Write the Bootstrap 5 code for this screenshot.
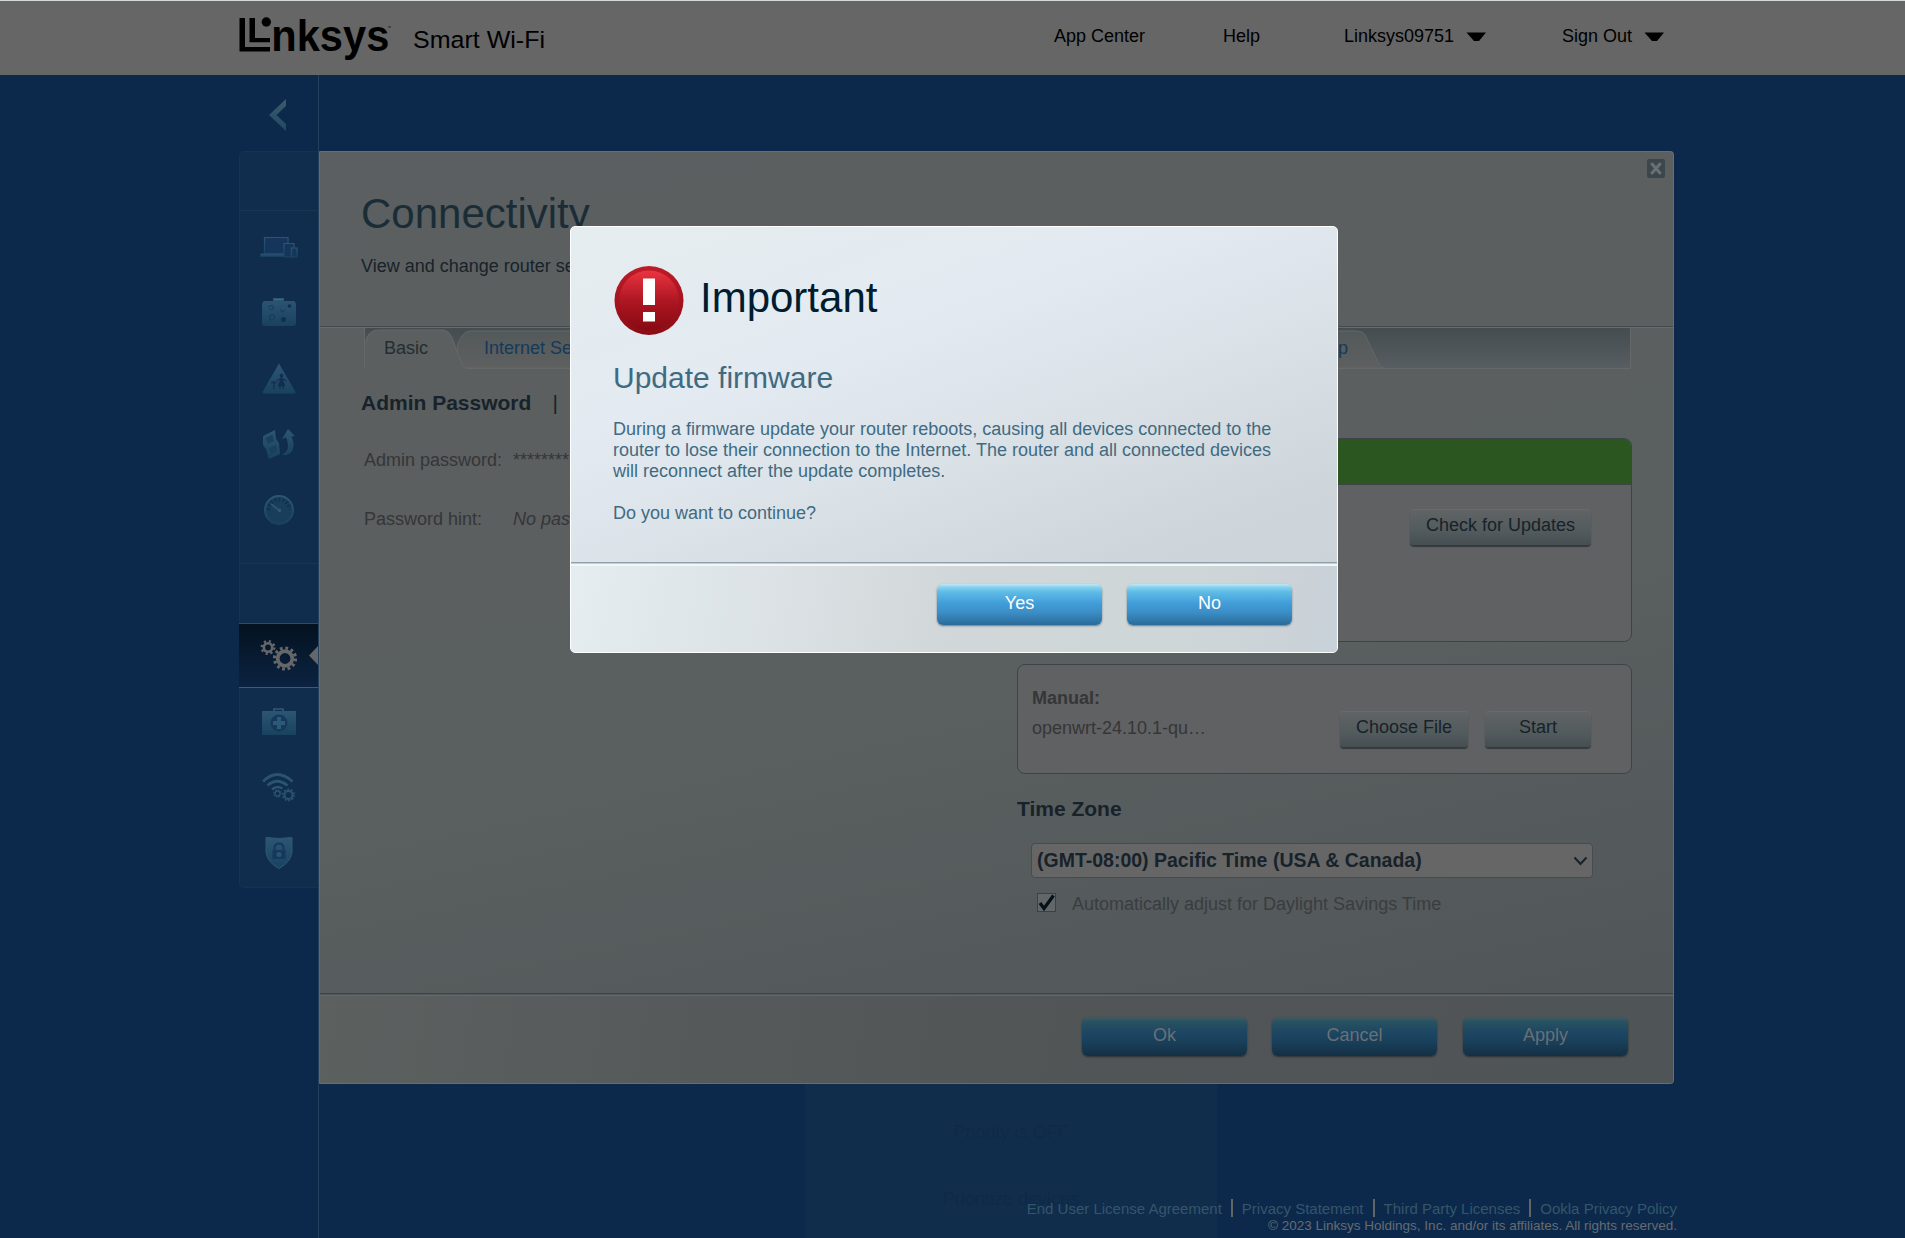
<!DOCTYPE html>
<html lang="en">
<head>
<meta charset="utf-8">
<title>Linksys Smart Wi-Fi</title>
<link href="https://cdn.jsdelivr.net/npm/bootstrap@5.3.0/dist/css/bootstrap.min.css" rel="stylesheet">
<style>
body{font-family:"Liberation Sans",Arial,sans-serif;font-size:18px;line-height:21px;background:#0c294c;color:#353637;width:1905px;height:1238px;overflow:hidden;position:relative}
a{text-decoration:none}
.topbar{height:75px;background:#666;border-top:1px solid #d5dbd9;padding:0 0 0 239px;color:#000}
.topbar a{color:#000}
.logo-svg{width:320px;height:74px;display:block}
.topnav{margin-left:495px;padding-top:25px}
.shell{height:1163px;padding-left:239px}
.side{width:80px;border-right:1px solid #24405c;flex:none}
.back{height:76px;padding:23px 0 0 29px}
.side-box{background:#112d4d;border:1px solid #15324f;border-right:0;border-radius:5px 0 0 5px;height:737px}
.side-gap{height:59px;border-bottom:1px solid #183651}
.side-gap.second{height:60px;border-bottom:0;border-top:1px solid #183651}
.side-item{height:66px;display:flex;align-items:center;justify-content:center;position:relative}
.side-item svg{overflow:visible;display:block}
.side-item.current{height:65px;background:linear-gradient(#04121f,#0b2342);border-top:1px solid #33495d;border-bottom:1px solid #4a5866;margin-left:-1px}
.pointer-tip{position:absolute;right:0;top:22px}
.content-col{width:1357px;padding-top:76px;flex:none}
.panel{width:1355px;height:933px;background:linear-gradient(168deg,#5b5f61 0,#5b5f60 40%,#5a5f5f 55%,#555a5c 75%,#4f5456 100%);border:1px solid #6a6d6e;border-left-color:#66696a;border-radius:0 4px 4px 0;position:relative}
.panel-head{height:176px;padding:37px 41px 0;border-bottom:1px solid #686c6d;box-shadow:inset 0 -1px #44494b}
.panel-head h1{font-size:42px;line-height:50px;color:#1a2d36;margin:0 0 17px}
.panel-head p{color:#182229;margin:0}
.close-x{position:absolute;right:8px;top:7px}
.tabstrip{width:1267px;height:41px;margin-left:44px;position:relative}
.tabstrip>svg{position:absolute;left:0;top:0}
.tabstrip nav{position:relative;padding:10px 283px 0 20px}
.tabstrip a{color:#15395a;white-space:nowrap}
.tabstrip a.on{color:#252d31;margin-right:56px}
.h-sec{font-size:21px;line-height:24px;font-weight:bold;color:#17222a;margin:0}
.col-l{width:697px;padding:22px 0 0 41px;flex:none}
.col-r{width:615px;padding-top:22px;flex:none}
.kv{height:59px;padding-left:3px}
.kv span:first-child{width:149px}
.box{background:#606162;border:1px solid #3d4448;border-radius:8px;overflow:hidden}
.box-fw{height:204px;margin-top:23px}
.green{height:46px;background:#2b561f;border-bottom:1px solid #3e464a}
.btn-g{font-size:18px;line-height:21px;color:#182229;border:0;border-radius:4px;height:36px;padding:5px 0 8px;background:linear-gradient(#616465,#525b5d 60%,#464e51);box-shadow:0 2px 1px #343a3c,inset 0 1px #686b6c}
.btn-g:hover{color:#182229}
.box-man{height:110px;margin-top:22px;padding:23px 40px 0 14px}
.tz{width:562px;height:35px;margin:22px 0 0 14px;background:#666;border:1px solid #454b4e;border-radius:4px;padding:0 4px 0 5px;color:#17222a;font-weight:bold;font-size:19.5px}
.dst{margin:14px 0 0 19px;color:#3a3d3f}
.panel-foot{position:absolute;left:0;right:0;bottom:0;height:90px;border-top:1px solid #3f4446;box-shadow:inset 0 1px #50585a,inset 0 2px #656869;background:linear-gradient(100deg,#5c605f,#56595a 30%,#525556 55%,#4f5456);padding:23px 45px 0 0;border-radius:0 0 4px 0}
.btn-b{width:165px;height:39px;font-size:18px;line-height:21px;border:0;border-radius:6px;padding:8px 0 10px;color:#6b6f72;background:linear-gradient(#3d5b67 0,#29525f 12%,#1c4663 40%,#193f5a 65%,#142f43);box-shadow:0 1px 2px #2c3032}
.ghost{width:412px;height:154px;margin-left:486px;background:#112d4c;color:#0f2948;text-align:center;padding-top:37px;line-height:22px}
.ghost p{margin:0 0 45px}
.legal{position:absolute;right:228px;top:1199px;font-size:15px;line-height:17px;text-align:right}
.legal a{color:#34566b;padding:1px 0 0}
.legal .lnk{border-left:2px solid #626567;padding-left:9px;margin-left:9px}
.legal small{font-size:13.5px;color:#676b70;line-height:15px;display:block;margin-top:1px}
.dlg{position:absolute;left:570px;top:226px;width:768px;height:427px;border:1px solid #fff;border-radius:5px;background:linear-gradient(160deg,#e5edef 0,#e3eaf1 30%,#dbe2e8 50%,#cfd6db 75%,#c8d0d7 100%);overflow:hidden}
.dlg-main{height:335px;padding:39px 42px 0;color:#3f6b82}
.dlg h2{font-size:42px;line-height:50px;color:#001d30;margin:0 0 0 16px;padding-top:7px}
.dlg h3{font-size:30px;line-height:36px;margin:24px 0 23px;color:#3f6b82}
.dlg p{margin:0 0 21px;width:670px}
.dlg-foot{height:91px;border-top:1px solid #8fa0a8;box-shadow:inset 0 1px #c4ced3,inset 0 3px #f3f6f7;background:linear-gradient(100deg,#e5edf0,#dbe1e4 28%,#d1d6d9 50%,#ced6d8 80%,#c9d1d9);padding:21px 45px 0 0}
.dlg .btn-b{color:#fff;height:41px;padding:9px 0 11px;background:linear-gradient(#bfe9f7 0,#86d1ee 8%,#5dbbe6 20%,#419cd8 48%,#3c8fc8 68%,#2a6b9a);box-shadow:0 1px 2px #6b7a83}
</style>
<script src="https://cdn.jsdelivr.net/npm/bootstrap@5.3.0/dist/js/bootstrap.bundle.min.js"></script>
</head>
<body>
<header class="topbar d-flex">
  <svg class="logo-svg" viewBox="239 1 320 74" fill="#000">
    <path d="M239.5 18H245V47H270V51.600H239.500ZM249.500 18H255V38H270V42.300H249.500Z"/>
    <circle cx="266.300" cy="22" r="4.700"/>
    <text x="271.300" y="51" font-size="44" font-weight="bold" textLength="118" lengthAdjust="spacingAndGlyphs">nksys</text>
    <path d="M388 27h3" stroke="#222" stroke-width="1"/>
    <text x="413" y="47.500" font-size="24.500" textLength="132" lengthAdjust="spacingAndGlyphs">Smart Wi-Fi</text>
  </svg>
  <nav class="topnav d-flex">
    <a href="#" style="width:169px">App Center</a>
    <a href="#" style="width:121px">Help</a>
    <a href="#" class="d-flex" style="width:218px">Linksys09751<svg class="ms-2 mt-1" width="25" height="14"><path d="M4.500 2.500H24L17 11H12Z"/></svg></a>
    <a href="#" class="d-flex">Sign Out<svg class="ms-2 mt-1" width="24" height="14"><path d="M4.500 2.500H24L17 11H12Z"/></svg></a>
  </nav>
</header>

<svg width="0" height="0" class="position-absolute">
  <defs>
    <linearGradient id="ic" x1="0" y1="0" x2="0" y2="1"><stop offset="0" stop-color="#2c5674"/><stop offset="1" stop-color="#19425f"/></linearGradient>
    <linearGradient id="ch" x1="0" y1="0" x2="0" y2="1"><stop offset="0" stop-color="#3b5a6f"/><stop offset="1" stop-color="#1f4a60"/></linearGradient>
    <linearGradient id="strip" x1="0" y1="0" x2="0" y2="1"><stop offset="0" stop-color="#454d50"/><stop offset="1" stop-color="#575d60"/></linearGradient>
    <linearGradient id="tab" x1="0" y1="0" x2="0" y2="1"><stop offset="0" stop-color="#53595a"/><stop offset="1" stop-color="#5e6060"/></linearGradient>
    <linearGradient id="red" x1="0" y1="0" x2="0" y2="1"><stop offset="0" stop-color="#ea3340"/><stop offset=".5" stop-color="#ae1622"/><stop offset="1" stop-color="#860a12"/></linearGradient>
    <linearGradient id="rim" x1="0" y1="0" x2="0" y2="1"><stop offset="0" stop-color="#bd1c28"/><stop offset="1" stop-color="#8c0c15"/></linearGradient>
  </defs>
</svg>

<main class="shell d-flex">
  <aside class="side">
    <div class="back"><svg width="20" height="36" class="d-block"><path d="M18 1V8L8.500 17L18 26V33L1 17Z" fill="url(#ch)"/></svg></div>
    <div class="side-box">
      <div class="side-gap"></div>
      <div class="side-item pt-2"><svg width="36" height="24"><g fill="#15365a" stroke="url(#ic)" stroke-width="1.200"><path d="M3.500 1.500H27V18H3.500Z"/><path d="M0 18H24V20.500H0Z" fill="#204b68"/><path d="M23 7.500H33V21H23Z"/><path d="M30.500 12H36V21H30.500Z"/></g></svg></div>
      <div class="side-item pt-1"><svg width="34" height="29"><path d="M2 3H11V0H22V3H32Q34 4 34 7V25Q34 28 31 28H3Q0 28 0 25V7Q0 4 2 3Z" fill="url(#ic)"/><path d="M12 1.500h9" stroke="#496578"/><g fill="none" stroke="#16395a"><path d="M6 9q5-3 6 1q-3 3-5 1M8 17h4q2 3-1 5h-3zM18 12l3 2M20 14l3-2"/></g><circle cx="27.500" cy="8" r="1.800" fill="#122f4f"/><circle cx="21.500" cy="21.500" r="2.500" fill="#122f4f"/></svg></div>
      <div class="side-item pt-1"><svg width="34" height="31"><path d="M17 .5L33.500 29Q34 30.500 32 30.500H2Q0 30.500 .5 29Z" fill="url(#ic)"/><g stroke="#122f4f" stroke-width="1.300" fill="none"><circle cx="19.500" cy="12.500" r="1.200" fill="#122f4f"/><path d="M14.500 18L19.500 15L24.500 18"/><path d="M19.500 15L16.500 22.500H22.500Z" fill="#122f4f"/><path d="M18 22V26M21 22V26M12 18V26M9 19.500H14.500"/></g></svg></div>
      <div class="side-item pt-1"><svg width="34" height="31"><path d="M1 7L13 1L14 10L17 14L18 25L7 30L4 20L1 16Z" fill="url(#ic)"/><path d="M3.500 9L10.500 5.500L12 12L6 15ZM7 19L14 16L15 22L8.500 25.500Z" fill="#1c4059"/><path d="M20 10L26 0L33 7L29.500 7.500Q33 15 30.500 21Q27 28 20 25.500Q26 23 26 17Q26 12 24 8.500Z" fill="url(#ic)"/></svg></div>
      <div class="side-item pt-1"><svg width="34" height="32"><circle cx="17" cy="16" r="14" fill="#183e5b" stroke="url(#ic)" stroke-width="2"/><path d="M6.500 16A10.500 10.500 0 0 1 27.500 16" fill="none" stroke="#122f4f" stroke-width="3.500" stroke-dasharray="1.600 2.400"/><path d="M9 10L18 17" stroke="#2f5875" stroke-width="1.600"/><circle cx="17.500" cy="16.500" r="1.700" fill="#2f5875"/></svg></div>
      <div style="height:22px"></div>
      <div class="side-gap second"></div>
      <div class="side-item current">
        <svg width="36" height="32"><g fill="none" stroke="#65676a"><circle cx="7" cy="7.500" r="4.200" stroke-width="2.600"/><circle cx="7" cy="7.500" r="6.300" stroke-width="2.400" stroke-dasharray="2.200 2.748"/><circle cx="24" cy="18.500" r="7.300" stroke-width="3.800"/><circle cx="24" cy="18.500" r="10.500" stroke-width="3.200" stroke-dasharray="2.800 2.698"/></g></svg>
        <svg class="pointer-tip" width="9" height="19"><path d="M9 0V19L0 9.500Z" fill="#65686a"/></svg>
      </div>
      <div class="side-item"><svg width="34" height="27"><path d="M0 3H34V27H0Z" fill="url(#ic)"/><path d="M12 3V1H21V3" fill="none" stroke="#315a73" stroke-width="1.700"/><circle cx="17" cy="15" r="8.500" fill="#16385a"/><path d="M17 9V21M11 15H23" stroke="#2c5a76" stroke-width="4"/></svg></div>
      <div class="side-item"><svg width="34" height="28"><g fill="none" stroke="#2a5470"><path d="M1 8.500Q15-5.500 30.500 8.500M5.500 12.500Q15 4 25.500 12.500" stroke-width="2.700"/><path d="M10 16.500Q15 12 20.500 15.500" stroke-width="2.500"/><circle cx="15.500" cy="20.500" r="2.500" stroke-width="1.300"/><circle cx="15.500" cy="20.500" r="3.600" stroke-width="1.300" stroke-dasharray="1.400 1.427"/><circle cx="26.500" cy="22" r="4" stroke-width="1.800"/><circle cx="26.500" cy="22" r="5.600" stroke-width="1.800" stroke-dasharray="1.760 1.760"/></g></svg></div>
      <div class="side-item"><svg width="28" height="32"><path d="M1 .5Q14 2.500 27 .5V15Q26 25 14 31.500Q2 25 1 15Z" fill="url(#ic)" stroke="#2f5a72"/><path d="M9.500 14V11Q9.500 6.500 14 6.500Q18.500 6.500 18.500 11V14" fill="none" stroke="#16385a" stroke-width="2"/><path d="M7.500 13H20.500V22H7.500Z" fill="#16385a"/><circle cx="14" cy="17.500" r="2.500" fill="#2a5470"/></svg></div>
    </div>
  </aside>

  <div class="content-col">
    <section class="panel">
      <svg class="close-x" width="18" height="19"><rect width="18" height="19" rx="2" fill="#3b474c"/><path d="M5 5L13 14M13 5L5 14" stroke="#6b7173" stroke-width="3" stroke-linecap="round"/></svg>
      <div class="panel-head"><h1>Connectivity</h1><p>View and change router settings</p></div>
      <div class="tabstrip">
        <svg width="1267" height="42">
          <rect width="1267" height="40" fill="url(#strip)"/>
          <path d="M90 40L94 16Q99 3 106 3H993Q999 3 1001 7L1015 36Q1017 40 1020 40Z" fill="url(#tab)" stroke="#646666"/>
          <path d="M1 41V14Q3 2 15 2H78Q85 2 88 10L97 34Q99 40 104 40.500V42H1Z" fill="#5b5f60"/>
          <path d="M.5 0V40.500M2 14Q4 2 15 2H78Q85 2 88 10L97 34Q99 40.500 104 40.500H1266.500V0" fill="none" stroke="#676969"/>
        </svg>
        <nav class="d-flex"><a href="#" class="on">Basic</a><a href="#" class="me-auto">Internet Settings</a><a href="#">CA Router Setup</a></nav>
      </div>
      <div class="d-flex">
        <div class="col-l">
          <div class="d-flex h-sec"><h4 class="h-sec">Admin Password</h4><span class="fw-normal" style="margin-left:21px">|</span></div>
          <div class="kv d-flex" style="margin-top:35px"><span>Admin password:</span><span>********</span></div>
          <div class="kv d-flex"><span>Password hint:</span><i>No password hint</i></div>
        </div>
        <div class="col-r">
          <h4 class="h-sec">Firmware Update</h4>
          <div class="box box-fw"><div class="green"></div><div class="d-flex justify-content-end" style="padding:24px 40px 0 0"><button class="btn btn-g" style="width:181px">Check for Updates</button></div></div>
          <div class="box box-man"><b class="d-block">Manual:</b>
            <div class="d-flex align-items-start" style="padding-top:2px"><span class="me-auto" style="padding-top:7px">openwrt-24.10.1-qu…</span><button class="btn btn-g" style="width:128px;margin-right:17px">Choose File</button><button class="btn btn-g" style="width:106px">Start</button></div>
          </div>
          <h4 class="h-sec" style="margin-top:23px">Time Zone</h4>
          <div class="tz d-flex align-items-center justify-content-between"><span>(GMT-08:00) Pacific Time (USA &amp; Canada)</span><svg width="15" height="10"><path d="M1.500 1.500L7.500 8L13.500 1.500" fill="none" stroke="#17222a" stroke-width="2"/></svg></div>
          <div class="dst d-flex"><svg width="21" height="21" style="margin-right:15px"><rect x="1.500" y="1.500" width="18" height="18" fill="#62676a" stroke="#23495a"/><path d="M4 11L8 16.500L17.500 3.500" fill="none" stroke="#06121a" stroke-width="3.300"/></svg><span style="padding-top:2px">Automatically adjust for Daylight Savings Time</span></div>
        </div>
      </div>
      <div class="panel-foot d-flex justify-content-end"><button class="btn btn-b">Ok</button><button class="btn btn-b" style="margin:0 26px 0 25px">Cancel</button><button class="btn btn-b">Apply</button></div>
    </section>
    <div class="ghost"><p>Priority is OFF</p><p>Prioritize devices</p></div>
  </div>
</main>

<footer class="legal">
  <div class="d-flex justify-content-end"><a href="#">End User License Agreement</a><a class="lnk" href="#">Privacy Statement</a><a class="lnk" href="#">Third Party Licenses</a><a class="lnk" href="#">Ookla Privacy Policy</a></div>
  <small>© 2023 Linksys Holdings, Inc. and/or its affiliates. All rights reserved.</small>
</footer>

<div class="dlg" role="dialog">
  <div class="dlg-main">
    <div class="d-flex"><svg width="71" height="70" class="flex-none"><circle cx="36" cy="34.500" r="34.500" fill="url(#rim)"/><circle cx="36" cy="34.500" r="30" fill="url(#red)"/><path d="M30 12.500H42V39H30ZM30 46H42V55.500H30Z" fill="#fff"/></svg><h2>Important</h2></div>
    <h3>Update firmware</h3>
    <p>During a firmware update your router reboots, causing all devices connected to the router to lose their connection to the Internet. The router and all connected devices will reconnect after the update completes.</p>
    <p>Do you want to continue?</p>
  </div>
  <div class="dlg-foot d-flex justify-content-end"><button class="btn btn-b" style="margin-right:25px">Yes</button><button class="btn btn-b">No</button></div>
</div>
</body>
</html>
